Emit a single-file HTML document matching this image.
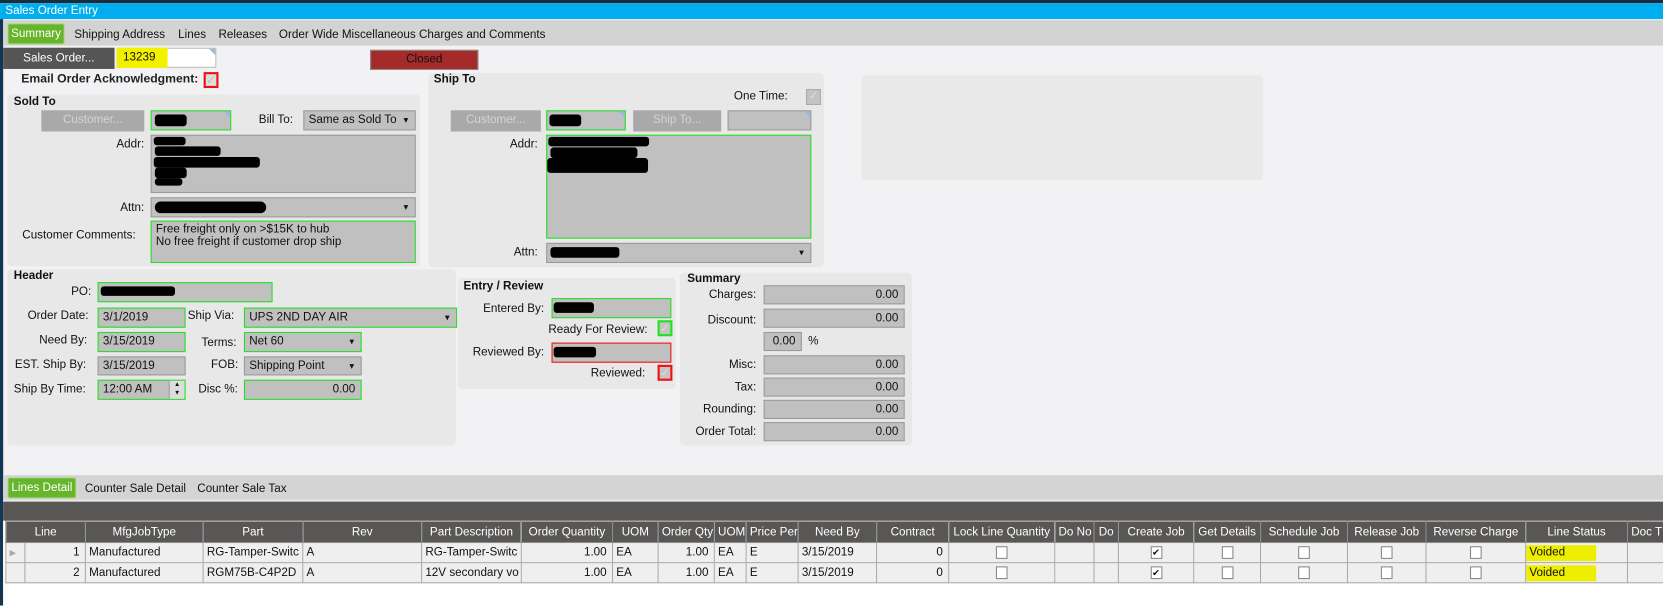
<!DOCTYPE html>
<html><head><meta charset="utf-8">
<style>
*{box-sizing:border-box;margin:0;padding:0}
html,body{width:1663px;height:605px;overflow:hidden;background:#fff}
#w{position:absolute;left:0;top:0;width:1568px;height:571px;transform:scale(1.06059);transform-origin:0 0;font-family:"Liberation Sans",Arial,sans-serif;font-size:11px;color:#111;background:#f2f2f4;overflow:hidden}
.a{position:absolute}
.t{position:absolute;white-space:nowrap;line-height:13px}
.r{text-align:right}
.b{font-weight:bold}
.pn{position:absolute;background:#e8e8e8;border-radius:4px}
.f{position:absolute;background:#c0c0c0;border:1px solid #9a9a9a;line-height:16px;padding-left:4px;white-space:nowrap;overflow:hidden}
.g{border:1px solid #22e022}
.rd{border:1px solid #ee1111}
.btn{position:absolute;background:#a9a9a9;color:#d4d4d4;text-align:center;line-height:19px}
.blob{position:absolute;background:#000;border-radius:3px}
.dd::after{content:"▾";position:absolute;right:6px;top:0;font-size:9px}
.cb{position:absolute;width:14px;height:15px;background:#c4c4c4;border:1px solid #aaa;color:#ddd;font-size:11px;line-height:13px;text-align:center}
.num{text-align:right;padding-right:5px}
table{border-collapse:collapse;table-layout:fixed;position:absolute;left:5px;top:491px;width:1563px}
td{border:1px solid #aaa;height:19px;white-space:nowrap;overflow:hidden;padding:0 3px;font-size:11px}
thead td{background:#595755;color:#fff;text-align:center;border-color:#8a8a8a;height:20px}
tbody td{background:#efefef}
.ck{display:inline-block;width:11px;height:12px;border:1px solid #888;background:#fff;vertical-align:middle;font-size:9px;line-height:10px;text-align:center}
</style></head><body><div id="w">
<!-- title -->
<div class="a" style="left:0;top:0;width:1568px;height:3px;background:#1c2c3a"></div>
<div class="a" style="left:0;top:3px;width:1568px;height:15px;background:#00aeef"></div>
<div class="t" style="left:5px;top:4px;color:#fff">Sales Order Entry</div>
<div class="a" style="left:0;top:18px;width:3px;height:553px;background:#163552"></div>
<!-- tabs -->
<div class="a" style="left:3px;top:19px;width:1565px;height:24px;background:#d3d3d3"></div>
<div class="a" style="left:7px;top:22px;width:54px;height:20px;background:#66b52a;border:1px solid #a8d88a;border-radius:2px;color:#fff;text-align:center;line-height:18px">Summary</div>
<div class="t" style="left:70px;top:27px">Shipping Address</div>
<div class="t" style="left:168px;top:27px">Lines</div>
<div class="t" style="left:206px;top:27px">Releases</div>
<div class="t" style="left:263px;top:27px">Order Wide Miscellaneous Charges and Comments</div>
<!-- sales order row -->
<div class="a" style="left:3px;top:45px;width:105px;height:20px;background:#555;color:#fff;text-align:center;line-height:20px">Sales Order...</div>
<div class="a" style="left:110px;top:45px;width:94px;height:19px;background:#fff;border:1px solid #bbb"></div>
<div class="a" style="left:110px;top:45px;width:48px;height:19px;background:#f2f200"></div>
<div class="t" style="left:116px;top:48px">13239</div>
<div class="a" style="left:197px;top:46px;width:0;height:0;border-left:6px solid transparent;border-top:6px solid #9fb8d8"></div>
<div class="a" style="left:349px;top:47px;width:102px;height:19px;background:#a52a2a;border:1px solid #888;text-align:center;line-height:17px;color:#111">Closed</div>
<!-- email -->
<div class="t" style="left:20px;top:69px;font-size:11.5px;font-weight:bold;color:#222">Email Order Acknowledgment:</div>
<div class="cb" style="left:192px;top:68px;border:2px solid #ee1111;background:#ddd;color:#bbb">✓</div>
<!-- sold to -->
<div class="pn" style="left:7px;top:89px;width:389px;height:162px"></div>
<div class="t b" style="left:13px;top:90px">Sold To</div>
<div class="btn" style="left:39px;top:104px;width:97px;height:20px">Customer...</div>
<div class="f g" style="left:142px;top:104px;width:76px;height:19px"></div>
<div class="blob" style="left:146px;top:108px;width:30px;height:11px"></div>
<div class="a" style="left:211px;top:105px;border-left:6px solid transparent;border-top:6px solid #9fb8d8"></div>
<div class="t" style="left:244px;top:107px">Bill To:</div>
<div class="f dd" style="left:286px;top:104px;width:106px;height:19px">Same as Sold To</div>
<div class="t r" style="left:60px;top:130px;width:76px">Addr:</div>
<div class="f" style="left:142px;top:127px;width:250px;height:55px"></div>
<div class="blob" style="left:145px;top:129px;width:30px;height:8px"></div>
<div class="blob" style="left:146px;top:138px;width:62px;height:9px"></div>
<div class="blob" style="left:145px;top:148px;width:100px;height:10px"></div>
<div class="blob" style="left:146px;top:158px;width:30px;height:10px"></div>
<div class="blob" style="left:146px;top:168px;width:26px;height:7px"></div>
<div class="t r" style="left:60px;top:190px;width:76px">Attn:</div>
<div class="f dd" style="left:142px;top:186px;width:250px;height:19px"></div>
<div class="blob" style="left:146px;top:190px;width:105px;height:11px;border-radius:6px"></div>
<div class="t" style="left:21px;top:216px">Customer Comments:</div>
<div class="f g" style="left:142px;top:208px;width:250px;height:40px;line-height:12px;padding-top:1px">Free freight only on &gt;$15K to hub<br>No free freight if customer drop ship</div>
<!-- ship to -->
<div class="pn" style="left:404px;top:69px;width:373px;height:183px"></div>
<div class="t b" style="left:409px;top:69px">Ship To</div>
<div class="t" style="left:692px;top:85px">One Time:</div>
<div class="cb" style="left:760px;top:84px">✓</div>
<div class="btn" style="left:425px;top:104px;width:85px;height:20px">Customer...</div>
<div class="f g" style="left:515px;top:104px;width:75px;height:19px"></div>
<div class="blob" style="left:518px;top:108px;width:30px;height:11px"></div>
<div class="a" style="left:583px;top:105px;border-left:6px solid transparent;border-top:6px solid #9fb8d8"></div>
<div class="btn" style="left:597px;top:104px;width:83px;height:20px">Ship To...</div>
<div class="f" style="left:686px;top:104px;width:79px;height:19px"></div>
<div class="a" style="left:758px;top:105px;border-left:6px solid transparent;border-top:6px solid #9fb8d8"></div>
<div class="t r" style="left:430px;top:130px;width:77px">Addr:</div>
<div class="f g" style="left:515px;top:127px;width:250px;height:98px"></div>
<div class="blob" style="left:517px;top:129px;width:95px;height:9px"></div>
<div class="blob" style="left:519px;top:139px;width:82px;height:10px"></div>
<div class="blob" style="left:516px;top:149px;width:95px;height:14px"></div>
<div class="t r" style="left:430px;top:232px;width:77px">Attn:</div>
<div class="f dd" style="left:515px;top:229px;width:250px;height:19px"></div>
<div class="blob" style="left:519px;top:233px;width:65px;height:10px"></div>
<!-- right empty -->
<div class="pn" style="left:812px;top:71px;width:379px;height:99px;background:#e9e9e9"></div>
<!-- header -->
<div class="pn" style="left:7px;top:254px;width:423px;height:166px"></div>
<div class="t b" style="left:13px;top:254px">Header</div>
<div class="t r" style="left:20px;top:269px;width:66px">PO:</div>
<div class="f g" style="left:92px;top:266px;width:165px;height:19px"></div>
<div class="blob" style="left:95px;top:270px;width:70px;height:9px"></div>
<div class="t" style="left:26px;top:292px">Order Date:</div>
<div class="f g" style="left:92px;top:290px;width:83px;height:19px">3/1/2019</div>
<div class="t" style="left:177px;top:292px">Ship Via:</div>
<div class="f g dd" style="left:230px;top:290px;width:201px;height:19px">UPS 2ND DAY AIR</div>
<div class="t" style="left:37px;top:315px">Need By:</div>
<div class="f g" style="left:92px;top:313px;width:83px;height:19px">3/15/2019</div>
<div class="t" style="left:190px;top:317px">Terms:</div>
<div class="f g dd" style="left:230px;top:313px;width:111px;height:19px">Net 60</div>
<div class="t" style="left:14px;top:338px">EST. Ship By:</div>
<div class="f" style="left:92px;top:336px;width:83px;height:18px">3/15/2019</div>
<div class="t" style="left:199px;top:338px">FOB:</div>
<div class="f dd" style="left:230px;top:336px;width:111px;height:18px">Shipping Point</div>
<div class="t" style="left:13px;top:361px">Ship By Time:</div>
<div class="f g" style="left:92px;top:358px;width:83px;height:19px">12:00 AM</div>
<div class="a" style="left:159px;top:359px;width:15px;height:17px;background:#ddd;border-left:1px solid #999;font-size:6px;line-height:8px;text-align:center">▲<br>▼</div>
<div class="t" style="left:187px;top:361px">Disc %:</div>
<div class="f g num" style="left:230px;top:358px;width:111px;height:19px">0.00</div>
<!-- entry review -->
<div class="pn" style="left:432px;top:262px;width:205px;height:105px"></div>
<div class="t b" style="left:437px;top:264px">Entry / Review</div>
<div class="t r" style="left:430px;top:285px;width:83px">Entered By:</div>
<div class="f g" style="left:520px;top:281px;width:113px;height:19px"></div>
<div class="blob" style="left:522px;top:285px;width:38px;height:10px"></div>
<div class="t" style="left:517px;top:305px">Ready For Review:</div>
<div class="cb" style="left:620px;top:302px;border:2px solid #22e022">✓</div>
<div class="t r" style="left:430px;top:326px;width:83px">Reviewed By:</div>
<div class="f rd" style="left:520px;top:323px;width:113px;height:19px"></div>
<div class="blob" style="left:522px;top:327px;width:40px;height:10px"></div>
<div class="t" style="left:557px;top:346px">Reviewed:</div>
<div class="cb" style="left:620px;top:344px;border:2px solid #ee1111">✓</div>
<!-- summary -->
<div class="pn" style="left:641px;top:257px;width:219px;height:163px"></div>
<div class="t b" style="left:648px;top:257px">Summary</div>
<div class="t r" style="left:640px;top:272px;width:73px">Charges:</div>
<div class="f num" style="left:720px;top:269px;width:133px;height:18px">0.00</div>
<div class="t r" style="left:640px;top:296px;width:73px">Discount:</div>
<div class="f num" style="left:720px;top:291px;width:133px;height:18px">0.00</div>
<div class="f num" style="left:720px;top:313px;width:36px;height:18px">0.00</div>
<div class="t" style="left:762px;top:316px">%</div>
<div class="t r" style="left:640px;top:338px;width:73px">Misc:</div>
<div class="f num" style="left:720px;top:335px;width:133px;height:18px">0.00</div>
<div class="t r" style="left:640px;top:359px;width:73px">Tax:</div>
<div class="f num" style="left:720px;top:356px;width:133px;height:18px">0.00</div>
<div class="t r" style="left:640px;top:380px;width:73px">Rounding:</div>
<div class="f num" style="left:720px;top:377px;width:133px;height:18px">0.00</div>
<div class="t r" style="left:640px;top:401px;width:73px">Order Total:</div>
<div class="f num" style="left:720px;top:398px;width:133px;height:18px">0.00</div>
<!-- bottom tabs -->
<div class="a" style="left:3px;top:448px;width:1565px;height:23px;background:#d4d4d4"></div>
<div class="a" style="left:7px;top:450px;width:65px;height:20px;background:#66b52a;border:1px solid #a8d88a;border-radius:2px;color:#fff;text-align:center;line-height:18px">Lines Detail</div>
<div class="t" style="left:80px;top:455px">Counter Sale Detail</div>
<div class="t" style="left:186px;top:455px">Counter Sale Tax</div>
<div class="a" style="left:3px;top:471px;width:1565px;height:2px;background:#e8e8e8"></div>
<div class="a" style="left:3px;top:473px;width:1565px;height:18px;background:#595755"></div>
<div class="a" style="left:3px;top:491px;width:1565px;height:80px;background:#fff"></div>
<table>
<colgroup><col style="width:18px"><col style="width:57px"><col style="width:111px"><col style="width:94px"><col style="width:112px"><col style="width:94px"><col style="width:86px"><col style="width:43px"><col style="width:53px"><col style="width:30px"><col style="width:49px"><col style="width:74px"><col style="width:68px"><col style="width:100px"><col style="width:37px"><col style="width:23px"><col style="width:71px"><col style="width:63px"><col style="width:82px"><col style="width:74px"><col style="width:94px"><col style="width:96px"><col style="width:34px"></colgroup>
<thead><tr><td colspan="2">Line</td><td>MfgJobType</td><td>Part</td><td>Rev</td><td>Part Description</td><td>Order Quantity</td><td>UOM</td><td>Order Qty</td><td>UOM</td><td>Price Per</td><td>Need By</td><td>Contract</td><td>Lock Line Quantity</td><td>Do No</td><td>Do</td><td>Create Job</td><td>Get Details</td><td>Schedule Job</td><td>Release Job</td><td>Reverse Charge</td><td>Line Status</td><td>Doc T</td></tr></thead>
<tbody>
<tr style="border-top:1px dotted #333;border-bottom:1px dotted #333"><td style="color:#aaa;font-size:8px">▶</td><td class="num">1</td><td>Manufactured</td><td>RG-Tamper-Switc</td><td>A</td><td>RG-Tamper-Switc</td><td class="num">1.00</td><td>EA</td><td class="num">1.00</td><td>EA</td><td>E</td><td>3/15/2019</td><td class="num">0</td><td style="text-align:center"><span class="ck"></span></td><td></td><td></td><td style="text-align:center"><span class="ck">✔</span></td><td style="text-align:center"><span class="ck"></span></td><td style="text-align:center"><span class="ck"></span></td><td style="text-align:center"><span class="ck"></span></td><td style="text-align:center"><span class="ck"></span></td><td style="padding:0"><span style="background:#eeee00;display:inline-block;width:66px;padding-left:3px;line-height:15px">Voided</span></td><td></td></tr>
<tr><td></td><td class="num">2</td><td>Manufactured</td><td>RGM75B-C4P2D</td><td>A</td><td>12V secondary vo</td><td class="num">1.00</td><td>EA</td><td class="num">1.00</td><td>EA</td><td>E</td><td>3/15/2019</td><td class="num">0</td><td style="text-align:center"><span class="ck"></span></td><td></td><td></td><td style="text-align:center"><span class="ck">✔</span></td><td style="text-align:center"><span class="ck"></span></td><td style="text-align:center"><span class="ck"></span></td><td style="text-align:center"><span class="ck"></span></td><td style="text-align:center"><span class="ck"></span></td><td style="padding:0"><span style="background:#eeee00;display:inline-block;width:66px;padding-left:3px;line-height:15px">Voided</span></td><td></td></tr>
</tbody></table>
</div></body></html>
